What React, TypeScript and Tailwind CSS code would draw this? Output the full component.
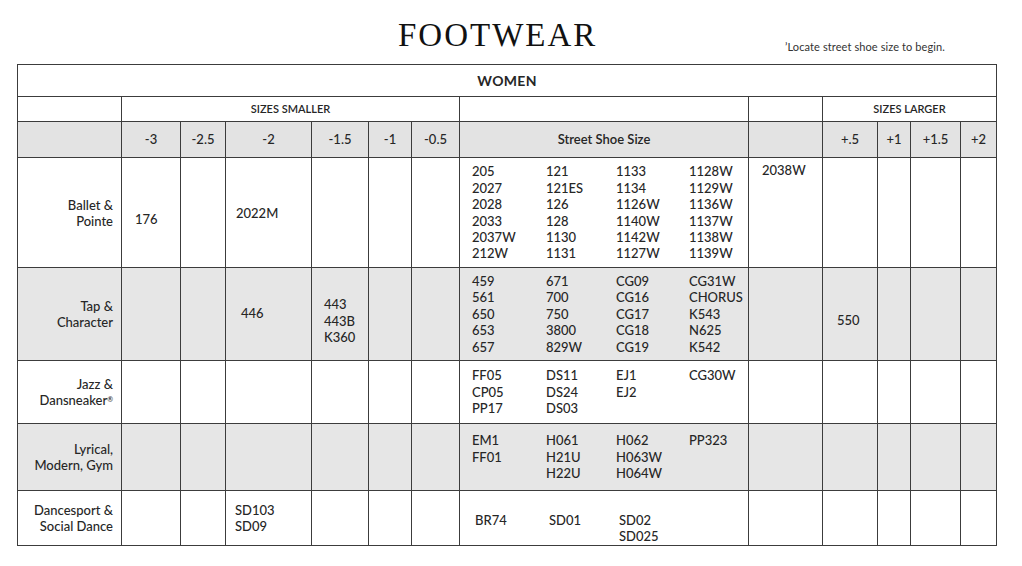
import React from "react";

const lato = "font-['Lato','Open_Sans',sans-serif]";

function Col({ items }: { items: string[] }) {
  return (
    <div>
      {items.map((t, i) => (
        <div key={i}>{t}</div>
      ))}
    </div>
  );
}

function Street({ cols, extra = "" }: { cols: string[][]; extra?: string }) {
  return (
    <div className={`grid grid-cols-[74px_70px_73px_1fr] pl-3 leading-[16.4px] ${extra}`}>
      {cols.map((c, i) => (
        <Col key={i} items={c} />
      ))}
    </div>
  );
}

const td = "border-[1.5px] border-[#3c3c3c] p-0";
const label = `${td} text-right pr-2 leading-[16px] align-middle`;

export default function App() {
  return (
    <div className={`w-[1022px] h-[566px] bg-white text-[#262626] ${lato}`}>
      <div className="flex items-end h-[64px] pb-[12px]">
        <div className="pl-[398px] font-['Liberation_Serif',serif] text-[33px] leading-[33px] tracking-[2px] text-[#111]">
          FOOTWEAR
        </div>
        <div className="ml-auto mr-[77px] text-[11px] leading-[11px] text-[#333] pb-0 tracking-[0.1px]">
          ’Locate street shoe size to begin.
        </div>
      </div>
      <table className="ml-[17px] w-[979px] table-fixed border-collapse text-[13px] font-medium">
        <colgroup>
          <col className="w-[104px]" />
          <col className="w-[59px]" />
          <col className="w-[45px]" />
          <col className="w-[86px]" />
          <col className="w-[57px]" />
          <col className="w-[43px]" />
          <col className="w-[48px]" />
          <col className="w-[289px]" />
          <col className="w-[74px]" />
          <col className="w-[55px]" />
          <col className="w-[33px]" />
          <col className="w-[50px]" />
          <col className="w-[36px]" />
        </colgroup>
        <tbody>
          <tr className="h-[32px]">
            <td colSpan={13} className={`${td} text-center font-bold text-[14px] tracking-[0.3px]`}>
              WOMEN
            </td>
          </tr>
          <tr className="h-[25px]">
            <td className={td}></td>
            <td colSpan={6} className={`${td} text-center text-[11px] font-semibold`}>
              SIZES SMALLER
            </td>
            <td className={td}></td>
            <td className={td}></td>
            <td colSpan={4} className={`${td} text-center text-[11px] font-semibold`}>
              SIZES LARGER
            </td>
          </tr>
          <tr className="h-[36px] bg-[#e3e3e3] text-center">
            <td className={td}></td>
            <td className={td}>-3</td>
            <td className={td}>-2.5</td>
            <td className={td}>-2</td>
            <td className={td}>-1.5</td>
            <td className={td}>-1</td>
            <td className={td}>-0.5</td>
            <td className={`${td} font-semibold`}>Street Shoe Size</td>
            <td className={td}></td>
            <td className={td}>+.5</td>
            <td className={td}>+1</td>
            <td className={td}>+1.5</td>
            <td className={td}>+2</td>
          </tr>

          {/* Ballet */}
          <tr className="h-[110px]">
            <td className={label}>
              Ballet &amp;
              <br />
              Pointe
            </td>
            <td className={`${td} align-middle pl-[13px] pt-[14px]`}>176</td>
            <td className={td}></td>
            <td className={`${td} align-middle pl-[10px] pt-[2px]`}>2022M</td>
            <td className={td}></td>
            <td className={td}></td>
            <td className={td}></td>
            <td className={`${td} align-middle`}>
              <Street
                cols={[
                  ["205", "2027", "2028", "2033", "2037W", "212W"],
                  ["121", "121ES", "126", "128", "1130", "1131"],
                  ["1133", "1134", "1126W", "1140W", "1142W", "1127W"],
                  ["1128W", "1129W", "1136W", "1137W", "1138W", "1139W"],
                ]}
              />
            </td>
            <td className={`${td} align-top pl-[13px] pt-[4px] leading-[16.4px]`}>2038W</td>
            <td className={td}></td>
            <td className={td}></td>
            <td className={td}></td>
            <td className={td}></td>
          </tr>

          {/* Tap */}
          <tr className="h-[93px] bg-[#e6e6e6]">
            <td className={label}>
              Tap &amp;
              <br />
              Character
            </td>
            <td className={td}></td>
            <td className={td}></td>
            <td className={`${td} align-middle pl-[15px]`}>446</td>
            <td className={`${td} align-middle pl-[12px] pt-[14px] leading-[16.4px]`}>
              443
              <br />
              443B
              <br />
              K360
            </td>
            <td className={td}></td>
            <td className={td}></td>
            <td className={`${td} align-middle`}>
              <Street
                cols={[
                  ["459", "561", "650", "653", "657"],
                  ["671", "700", "750", "3800", "829W"],
                  ["CG09", "CG16", "CG17", "CG18", "CG19"],
                  ["CG31W", "CHORUS", "K543", "N625", "K542"],
                ]}
              />
            </td>
            <td className={td}></td>
            <td className={`${td} align-middle pl-[14px] pt-[14px]`}>550</td>
            <td className={td}></td>
            <td className={td}></td>
            <td className={td}></td>
          </tr>

          {/* Jazz */}
          <tr className="h-[63px]">
            <td className={label}>
              Jazz &amp;
              <br />
              Dansneaker<sup className="text-[7px]">®</sup>
            </td>
            <td className={td}></td>
            <td className={td}></td>
            <td className={td}></td>
            <td className={td}></td>
            <td className={td}></td>
            <td className={td}></td>
            <td className={`${td} align-middle`}>
              <Street
                cols={[
                  ["FF05", "CP05", "PP17"],
                  ["DS11", "DS24", "DS03"],
                  ["EJ1", "EJ2"],
                  ["CG30W"],
                ]}
              />
            </td>
            <td className={td}></td>
            <td className={td}></td>
            <td className={td}></td>
            <td className={td}></td>
            <td className={td}></td>
          </tr>

          {/* Lyrical */}
          <tr className="h-[67px] bg-[#e6e6e6]">
            <td className={label}>
              Lyrical,
              <br />
              Modern, Gym
            </td>
            <td className={td}></td>
            <td className={td}></td>
            <td className={td}></td>
            <td className={td}></td>
            <td className={td}></td>
            <td className={td}></td>
            <td className={`${td} align-middle`}>
              <Street
                cols={[
                  ["EM1", "FF01"],
                  ["H061", "H21U", "H22U"],
                  ["H062", "H063W", "H064W"],
                  ["PP323"],
                ]}
              />
            </td>
            <td className={td}></td>
            <td className={td}></td>
            <td className={td}></td>
            <td className={td}></td>
            <td className={td}></td>
          </tr>

          {/* Dancesport */}
          <tr className="h-[55px]">
            <td className={label}>
              Dancesport &amp;
              <br />
              Social Dance
            </td>
            <td className={td}></td>
            <td className={td}></td>
            <td className={`${td} align-middle pl-[9px] leading-[16.4px]`}>
              SD103
              <br />
              SD09
            </td>
            <td className={td}></td>
            <td className={td}></td>
            <td className={td}></td>
            <td className={`${td} align-top pt-[21px]`}>
              <Street extra="pl-[15px]" cols={[["BR74"], ["SD01"], ["SD02", "SD025"]]} />
            </td>
            <td className={td}></td>
            <td className={td}></td>
            <td className={td}></td>
            <td className={td}></td>
            <td className={td}></td>
          </tr>
        </tbody>
      </table>
    </div>
  );
}
